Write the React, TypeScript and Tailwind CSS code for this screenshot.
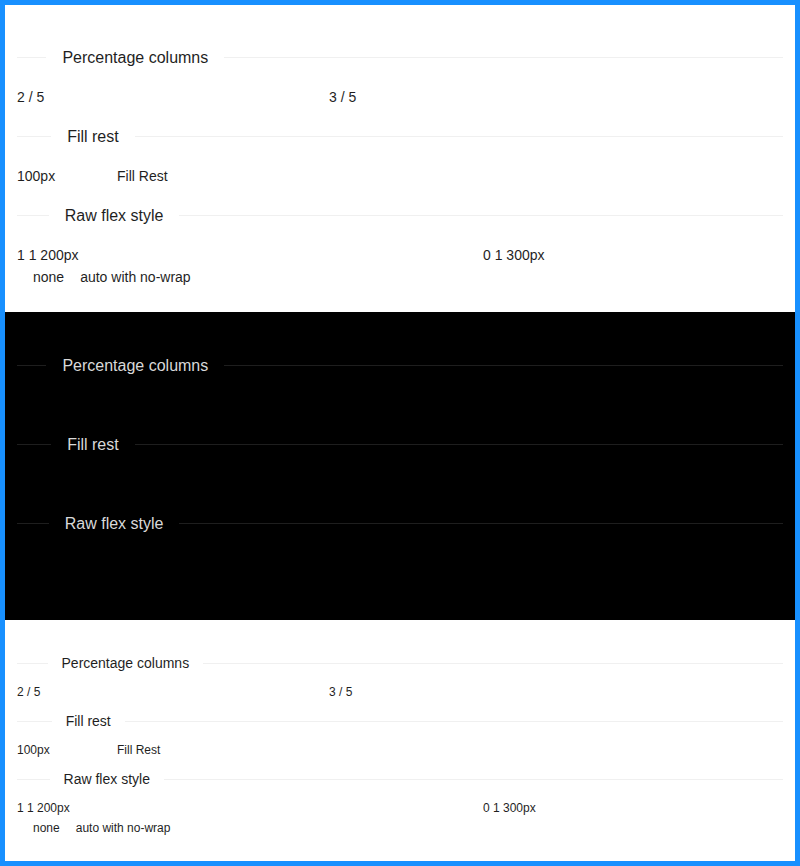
// Flex demo: three themed copies of the same layout (light, dark, small)

type Theme = "light" | "dark" | "small";

function Divider({ title, theme }: { title: string; theme: Theme }) {
  const line = theme === "dark" ? "bg-[#1e1e1e]" : "bg-[#f0f0f0]";
  const text =
    theme === "dark"
      ? "text-[#d9d9d9] text-base leading-[25px] px-4 my-4"
      : theme === "small"
        ? "text-[#1f1f1f] text-sm leading-[22px] px-[14px] my-2"
        : "text-[#1f1f1f] text-base leading-[25px] px-4 my-4";
  return (
    <div className="flex items-center">
      <div className={`h-px w-[5%] ${line}`} />
      <span className={`shrink-0 whitespace-nowrap ${text}`}>{title}</span>
      <div className={`h-px w-[95%] ${line}`} />
    </div>
  );
}

function Section({ theme }: { theme: Theme }) {
  const small = theme === "small";
  const item = small
    ? "text-xs leading-5 text-[#1f1f1f]"
    : theme === "dark"
      ? "text-sm leading-[22px] text-black"
      : "text-sm leading-[22px] text-[#1f1f1f]";
  const wrap =
    theme === "dark"
      ? "bg-black pt-[25px] pb-6"
      : small
        ? "bg-white pt-6 pb-[23px]"
        : "bg-white pt-6 pb-6";

  return (
    <div className={`px-3 ${wrap}`}>
      <Divider title="Percentage columns" theme={theme} />
      <div className={`flex ${item}`}>
        <div className="w-[312px] shrink-0">2 / 5</div>
        <div className="flex-1">3 / 5</div>
      </div>

      <Divider title="Fill rest" theme={theme} />
      <div className={`flex ${item}`}>
        <div className="w-[100px] shrink-0">100px</div>
        <div className="flex-1">Fill Rest</div>
      </div>

      <Divider title="Raw flex style" theme={theme} />
      <div className={`flex flex-col ${item}`}>
        <div className="flex">
          <div className="flex-[1_1_200px]">1 1 200px</div>
          <div className="flex-[0_1_300px]">0 1 300px</div>
        </div>
        <div className="flex gap-4 pl-4">
          <div className="flex-none">none</div>
          <div className="flex-auto whitespace-nowrap">auto with no-wrap</div>
        </div>
      </div>
    </div>
  );
}

export default function App() {
  return (
    <div
      className="h-[866px] w-[800px] border-[5px] border-[#1890ff] bg-white"
      style={{ fontFamily: '"Liberation Sans", Arial, sans-serif' }}
    >
      <Section theme="light" />
      <Section theme="dark" />
      <Section theme="small" />
    </div>
  );
}
